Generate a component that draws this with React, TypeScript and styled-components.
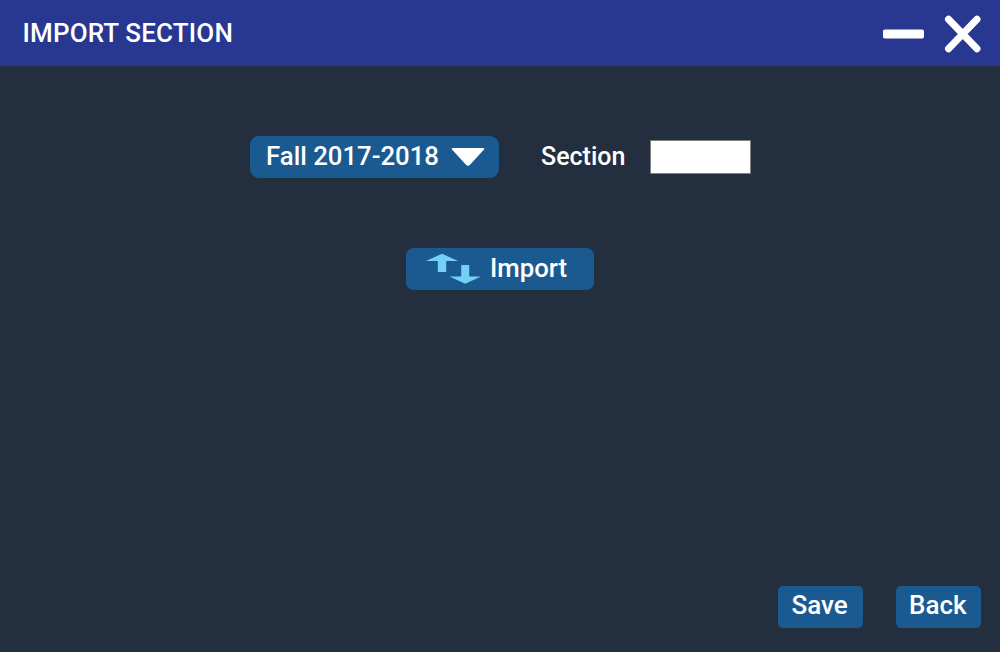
import React from "react";
import styled, { createGlobalStyle } from "styled-components";

const GlobalStyle = createGlobalStyle`
  *, *::before, *::after { box-sizing: border-box; }
  body { margin: 0; background: #232f3f; }
`;

const Window = styled.div`
  display: flex;
  flex-direction: column;
  width: 1000px;
  height: 652px;
  overflow: hidden;
  background: #232f3f;
  color: #fff;
  font: 500 26px/30px Roboto, sans-serif;
`;

const TitleBar = styled.header`
  display: flex;
  justify-content: space-between;
  flex: none;
  height: 66.4px;
  padding: 0 19px 0 22.5px;
  background: #283890;
`;

const Title = styled.h1`
  margin: 18px 0 0;
  font: inherit;
  letter-spacing: 0.15px;
`;

const WindowControls = styled.div`
  display: flex;
  align-items: flex-start;
  gap: 20px;
  padding-top: 15px;
`;

const ControlButton = styled.button`
  display: block;
  padding: 0;
  border: 0;
  background: none;
  svg { display: block; }
`;

const Content = styled.main`
  display: flex;
  flex: 1;
  flex-direction: column;
  align-items: center;
  padding-top: 70px;
`;

const Fields = styled.div`
  display: flex;
  align-items: flex-start;
  width: 501px;
  height: 42px;
`;

const Button = styled.button<{ $width: number; $radius: number; $pad: number; $top?: number }>`
  display: flex;
  align-items: flex-start;
  flex: none;
  width: ${(p) => p.$width}px;
  height: 41.6px;
  padding: ${(p) => p.$top ?? 5}px 0 0 ${(p) => p.$pad}px;
  border: 0;
  border-radius: ${(p) => p.$radius}px;
  background: #1b5a91;
  color: inherit;
  font: inherit;
  text-align: left;
  white-space: nowrap;
  svg { display: block; flex: none; }
`;

const Text = styled.span<{ $size?: number; $width?: number }>`
  width: ${(p) => (p.$width ? `${p.$width}px` : "auto")};
  font-size: ${(p) => p.$size ?? 26}px;
`;

const Caret = styled.svg`
  margin-top: 6px;
`;

const SectionLabel = styled.label`
  display: flex;
  margin-left: 42px;
  padding-top: 6px;
`;

const SectionInput = styled.input`
  width: 101px;
  height: 34px;
  margin: -2px 0 0;
  padding: 0 6px;
  border: 1px solid #808080;
  border-radius: 0;
  background: #fff;
  font: inherit;
`;

const ImportRow = styled.div`
  margin-top: 70px;
`;

const TransferIcon = styled.svg`
  margin-right: 9px;
`;

const Footer = styled.footer`
  display: flex;
  align-self: flex-end;
  gap: 32.5px;
  margin: auto 19.5px 24.5px 0;
`;

export default function App() {
  return (
    <Window>
      <GlobalStyle />
      <TitleBar>
        <Title>IMPORT SECTION</Title>
        <WindowControls>
          <ControlButton aria-label="Minimize">
            <svg width="42" height="38" viewBox="0 0 42 38">
              <rect x="1" y="14.4" width="41" height="9.2" rx="1.8" fill="#fff" />
            </svg>
          </ControlButton>
          <ControlButton aria-label="Close">
            <svg width="37" height="38" viewBox="0 0 37 38">
              <path
                d="M4.5 4.3 33 33.8M33 4.3 4.5 33.8"
                stroke="#fff"
                strokeWidth="7"
                strokeLinecap="round"
              />
            </svg>
          </ControlButton>
        </WindowControls>
      </TitleBar>
      <Content>
        <Fields>
          <Button $width={249.5} $radius={9} $pad={16.5}>
            <Text $size={25.75} $width={185}>Fall 2017-2018</Text>
            <Caret width="34" height="20" viewBox="0 0 34 20">
              <path
                d="M2 1H32Q34 1 33 2.5L19 17.7Q17 19.8 15 17.7L1 2.5Q0 1 2 1Z"
                fill="#fff"
              />
            </Caret>
          </Button>
          <SectionLabel>
            <Text $size={25} $width={109}>Section</Text>
            <SectionInput />
          </SectionLabel>
        </Fields>
        <ImportRow>
          <Button $width={188} $radius={8} $pad={20}>
            <TransferIcon width="55" height="32" viewBox="0 0 55 32">
              <path
                d="M16 .7 32 8H20.2V19H11.8V8H0ZM35.2 12H43.2V23.5H55L39.2 30.7 23.5 23.5H35.2Z"
                fill="#74d0f5"
              />
            </TransferIcon>
            <Text $size={25.75}>Import</Text>
          </Button>
        </ImportRow>
        <Footer>
          <Button $width={85} $radius={5} $pad={13.5} $top={4}>
            <Text>Save</Text>
          </Button>
          <Button $width={85} $radius={5} $pad={13.5} $top={4}>
            <Text>Back</Text>
          </Button>
        </Footer>
      </Content>
    </Window>
  );
}
